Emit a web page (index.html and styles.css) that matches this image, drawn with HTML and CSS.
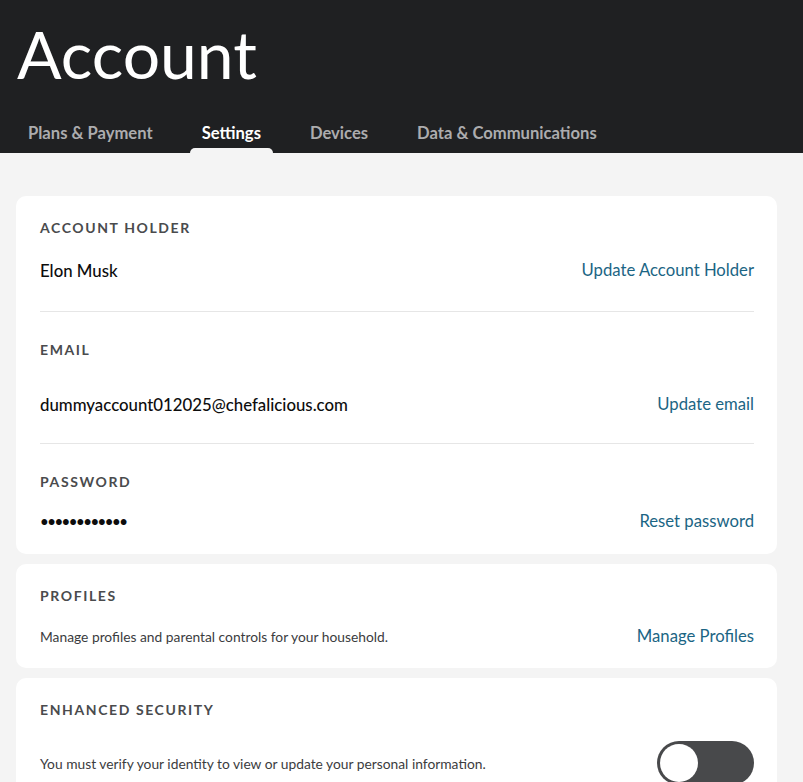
FILE: index.html
```html
<!DOCTYPE html>
<html lang="en">
<head>
  <meta charset="UTF-8" />
  <meta name="viewport" content="width=device-width, initial-scale=1.0"/>
  <title>Account - Settings</title>
  <link rel="stylesheet" href="styles.css">
</head>
<body>

  <header class="page-header">
    <h1 class="page-title">Account</h1>
    <nav class="tabs">
      <a class="tab" href="#">Plans &amp; Payment</a>
      <a class="tab active" href="#">Settings</a>
      <a class="tab" href="#">Devices</a>
      <a class="tab" href="#">Data &amp; Communications</a>
    </nav>
  </header>

  <main class="content">

    <section class="card">
      <div class="field field-holder">
        <h2 class="field-label">Account Holder</h2>
        <div class="field-row">
          <span class="field-value">Elon Musk</span>
          <a class="field-link" href="#">Update Account Holder</a>
        </div>
      </div>
      <div class="field field-email">
        <h2 class="field-label">Email</h2>
        <div class="field-row">
          <span class="field-value">dummyaccount012025@chefalicious.com</span>
          <a class="field-link" href="#">Update email</a>
        </div>
      </div>
      <div class="field field-password">
        <h2 class="field-label">Password</h2>
        <div class="field-row">
          <span class="field-value dots">&bull;&bull;&bull;&bull;&bull;&bull;&bull;&bull;&bull;&bull;&bull;&bull;</span>
          <a class="field-link" href="#">Reset password</a>
        </div>
      </div>
    </section>

    <section class="card">
      <div class="field field-profiles">
        <h2 class="field-label">Profiles</h2>
        <div class="field-row">
          <span class="field-note">Manage profiles and parental controls for your household.</span>
          <a class="field-link" href="#">Manage Profiles</a>
        </div>
      </div>
    </section>

    <section class="card">
      <div class="field field-security">
        <h2 class="field-label">Enhanced Security</h2>
        <div class="field-row">
          <span class="field-note">You must verify your identity to view or update your personal information.</span>
          <button class="toggle" aria-label="Enhanced security"><span class="knob"></span></button>
        </div>
      </div>
    </section>

  </main>

</body>
</html>
```

FILE: styles.css
```css
* {
  margin: 0;
  padding: 0;
  box-sizing: border-box;
}

html, body {
  font-family: 'Lato', 'Noto Sans', sans-serif;
  background: #f4f4f4;
  color: #111;
  min-height: 100vh;
  overflow: hidden;
}

a {
  text-decoration: none;
}

/* dark header with title and tab strip */
.page-header {
  background: #1f2022;
  height: 153px;
  padding: 0 16px;
  display: flex;
  flex-direction: column;
}

.page-title {
  font-family: 'Lato', sans-serif;
  font-weight: 400;
  font-size: 66px;
  line-height: 1;
  color: #fff;
  padding-top: 21px;
  margin-left: 1px;
}

.tabs {
  display: flex;
  gap: 25px;
  margin-top: auto;
}

.tab {
  position: relative;
  padding: 0 12px 10px;
  font-size: 16.6px;
  font-weight: 700;
  line-height: 20px;
  color: #acacae;
}

.tab.active {
  color: #fff;
}

.tab.active::after {
  content: "";
  position: absolute;
  left: 0;
  right: 0;
  bottom: 0;
  height: 5px;
  background: #f4f4f4;
  border-radius: 6px 6px 0 0;
}

/* cards */
.content {
  padding: 43px 26px 0 16px;
  display: flex;
  flex-direction: column;
  gap: 10px;
}

.card {
  background: #fff;
  border-radius: 10px;
  padding: 0 23px 0 24px;
}

.field {
  padding: 28px 0;
  border-top: 1px solid #e6e6e6;
}

.field:first-child {
  border-top: none;
  padding-top: 22px;
}

.field-label {
  font-size: 14px;
  font-weight: 700;
  line-height: 20px;
  letter-spacing: 1.6px;
  text-transform: uppercase;
  color: #4a4b4d;
}

.field-row {
  display: flex;
  align-items: center;
  justify-content: space-between;
  min-height: 30px;
}

.field-value {
  font-size: 16.8px;
  font-weight: 500;
  color: #0d0d0d;
}

.dots {
  font-size: 15px;
  letter-spacing: -1.5px;
}

.field-note {
  font-size: 13.8px;
  color: #3b3c3e;
}

.field-link {
  font-size: 16.7px;
  color: #1b6584;
}

.field-holder {
  padding-bottom: 26px;
}

.field-holder .field-row {
  margin-top: 17px;
}

.field-email {
  padding-bottom: 24px;
}

.field-email .field-row {
  margin-top: 29px;
}

.field-password {
  padding-bottom: 18px;
}

.field-password .field-row {
  margin-top: 14px;
}

.field-profiles {
  padding-bottom: 17px;
}

.field-profiles .field-row {
  margin-top: 15px;
}

.field-security .field-row {
  margin-top: 21px;
}

/* switch, shown off */
.toggle {
  width: 97px;
  height: 44px;
  border: none;
  border-radius: 22px;
  background: #48494b;
  padding: 3px;
  display: flex;
  cursor: pointer;
}

.knob {
  width: 38px;
  height: 38px;
  border-radius: 50%;
  background: #fff;
}
```
